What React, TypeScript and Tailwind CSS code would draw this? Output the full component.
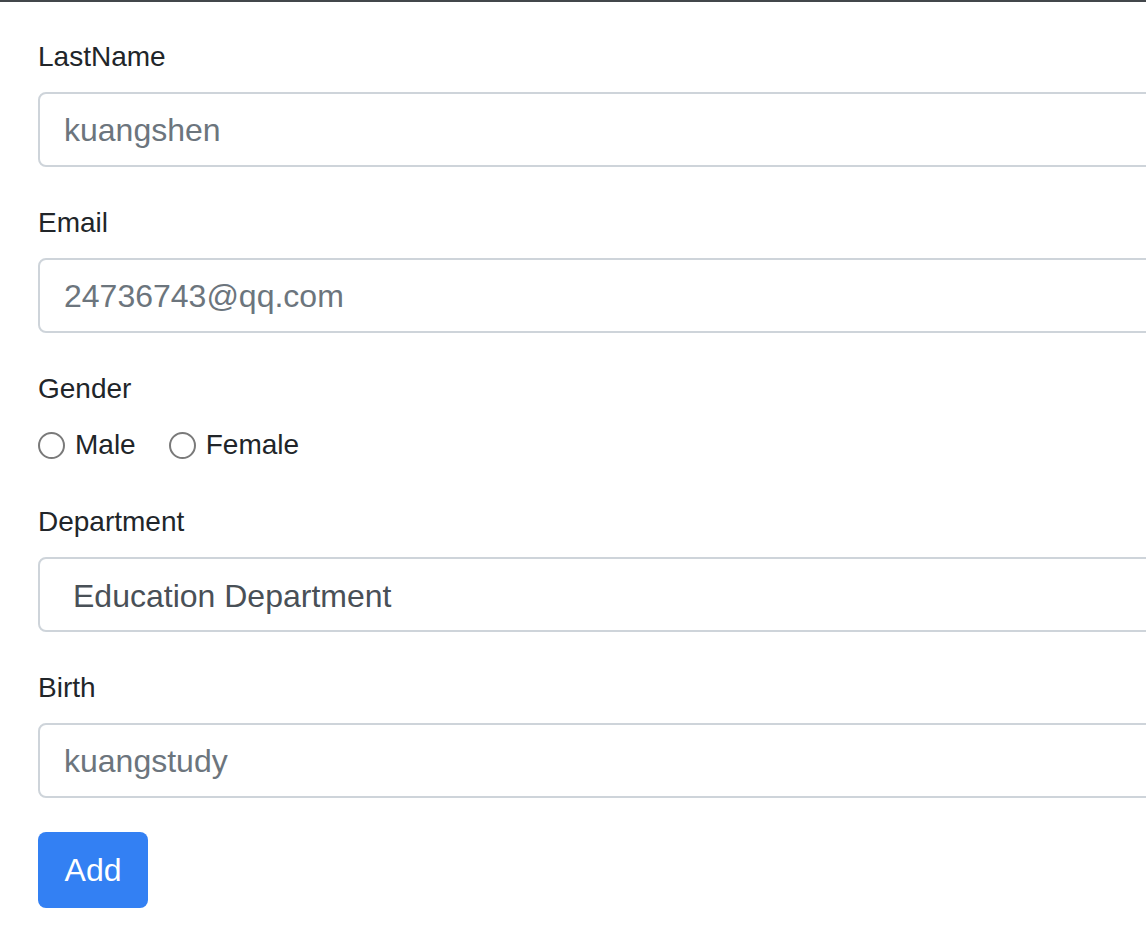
import React from "react";

const fieldClass =
  "block w-[1160px] h-[75px] rounded-[8px] border-2 border-[#ced4da] bg-white px-[24px] pt-[2px] text-[32px] text-[#495057] placeholder:text-[#6c757d] outline-none";

const Label = ({ children }: { children: React.ReactNode }) => (
  <label className="block h-[42px] leading-[44px] text-[28px] text-[#212529] mb-[15px]">
    {children}
  </label>
);

const Radio = ({ label }: { label: string }) => (
  <span className="flex items-center">
    <span className="w-[27px] h-[27px] rounded-full border-2 border-[#7a7a7a] bg-white" />
    <span className="ml-[10px] text-[28px] text-[#212529]">{label}</span>
  </span>
);

export default function App() {
  return (
    <div
      className="min-h-[942px] w-full overflow-hidden bg-white"
      style={{ fontFamily: '"Liberation Sans", Arial, sans-serif' }}
    >
      <div className="h-[2px] bg-[#43474b]" />

      <form className="pl-[38px] pt-[33px]" onSubmit={(e) => e.preventDefault()}>
        {/* LastName */}
        <div className="mb-[34px]">
          <Label>LastName</Label>
          <input className={fieldClass} placeholder="kuangshen" />
        </div>

        {/* Email */}
        <div className="mb-[34px]">
          <Label>Email</Label>
          <input className={fieldClass} placeholder="24736743@qq.com" />
        </div>

        {/* Gender */}
        <div className="mb-[34px]">
          <Label>Gender</Label>
          <div className="flex items-center h-[42px] mt-[2px] gap-[33px]">
            <Radio label="Male" />
            <Radio label="Female" />
          </div>
        </div>

        {/* Department */}
        <div className="mb-[34px]">
          <Label>Department</Label>
          <div className={fieldClass + " flex items-center"}>
            <span className="pl-[9px] text-[#495057]">Education Department</span>
          </div>
        </div>

        {/* Birth */}
        <div className="mb-[34px]">
          <Label>Birth</Label>
          <input className={fieldClass} placeholder="kuangstudy" />
        </div>

        <button
          type="submit"
          className="w-[110px] h-[76px] rounded-[8px] bg-[#3380f3] text-white text-[32px] flex items-center justify-center"
        >
          Add
        </button>
      </form>
    </div>
  );
}
